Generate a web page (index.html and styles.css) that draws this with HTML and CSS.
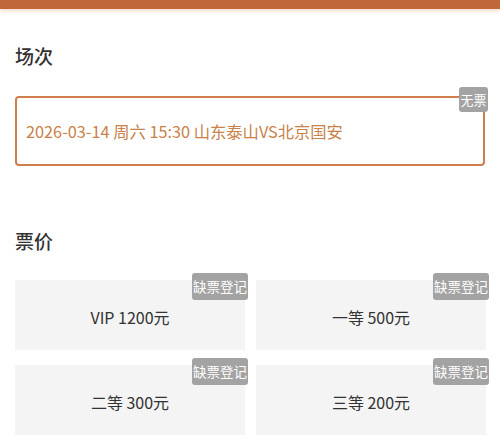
FILE: index.html
```html
<!DOCTYPE html>
<html lang="zh">
<head>
<meta charset="utf-8">
<link rel="stylesheet" href="styles.css">
</head>
<body>
<div class="topbar"></div>
<div class="page">
  <h2 class="title">场次</h2>
  <div class="session">
    <span class="session-text">2026-03-14 周六 15:30 山东泰山VS北京国安</span>
    <span class="badge badge-session">无票</span>
  </div>
  <h2 class="title title-price">票价</h2>
  <div class="grid">
    <div class="card"><span class="card-text">VIP 1200元</span><span class="badge badge-card">缺票登记</span></div>
    <div class="card"><span class="card-text">一等 500元</span><span class="badge badge-card">缺票登记</span></div>
    <div class="card"><span class="card-text">二等 300元</span><span class="badge badge-card">缺票登记</span></div>
    <div class="card"><span class="card-text">三等 200元</span><span class="badge badge-card">缺票登记</span></div>
  </div>
</div>
</body>
</html>
```
FILE: styles.css
```css
* { box-sizing: border-box; }
html, body { margin: 0; padding: 0; background: #fff; }
body {
  width: 500px;
  height: 440px;
  overflow: hidden;
  font-family: "Noto Sans CJK SC", "Noto Sans", sans-serif;
  color: #333;
}
.topbar {
  height: 9px;
  background: #c0683a;
  box-shadow: 0 2px 4px rgba(240, 180, 140, 0.5);
}
.page {
  padding: 0 15px;
}
.title {
  margin: 0;
  padding-top: 34px;
  font-size: 19px;
  line-height: 26px;
  font-weight: 500;
  color: #333;
}
.title-price { padding-top: 62px; }
.session {
  position: relative;
  margin-top: 27px;
  height: 70px;
  border: 2px solid #cf7f4c;
  border-radius: 4px;
  display: flex;
  align-items: center;
  padding-left: 9px;
}
.session-text {
  font-size: 16.3px;
  color: #c8824a;
}
.badge {
  position: absolute;
  background: #a3a3a3;
  color: #fff;
  border-radius: 3px;
  font-size: 13px;
  line-height: 1;
  display: flex;
  align-items: center;
  justify-content: center;
}
.badge-session {
  top: -11px;
  right: -5px;
  width: 29px;
  height: 25px;
}
.grid {
  margin-top: 26px;
  display: grid;
  grid-template-columns: 230px 230px;
  column-gap: 11px;
  row-gap: 15px;
}
.card {
  position: relative;
  height: 70px;
  background: #f4f4f4;
  display: flex;
  align-items: center;
  justify-content: center;
  padding-top: 4px;
}
.card-text {
  font-size: 16px;
  color: #333;
}
.badge-card {
  top: -7px;
  right: -3px;
  width: 56px;
  height: 27px;
  font-size: 13.5px;
}
```
